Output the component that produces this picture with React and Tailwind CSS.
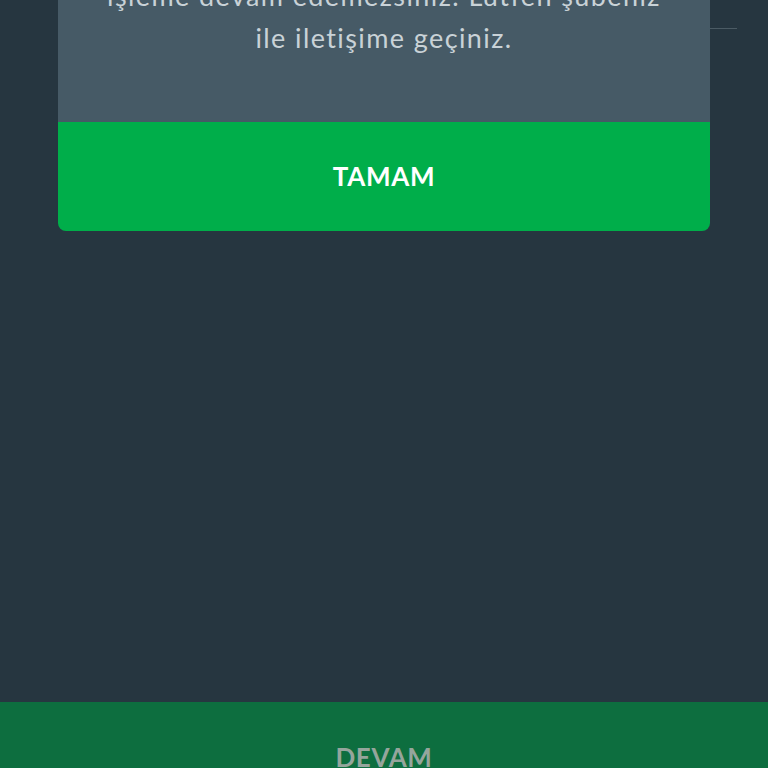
import React from 'react';

export default function App() {
  return (
    <div
      className="h-[768px] w-full overflow-hidden bg-[#263640] flex flex-col"
      style={{ fontFamily: 'Lato, "Noto Sans", sans-serif' }}
    >
      <div className="flex flex-row">
        <div className="w-[58px] shrink-0" />
        <div className="w-[652px] shrink-0 flex flex-col rounded-b-lg overflow-hidden">
          <div className="bg-[#465a66] pb-[63px] px-4">
            <p className="-mt-[25px] text-center text-[27px] tracking-[1.4px] leading-[42px] text-[#c9d2d7]">
              işleme devam edemezsiniz. Lütfen şubeniz
              <br />
              ile iletişime geçiniz.
            </p>
          </div>
          <button className="h-[109px] bg-[#00ae4a] text-white text-[26px] font-bold tracking-wide flex items-center justify-center">
            TAMAM
          </button>
        </div>
        <div className="flex-1 pt-[28px]">
          <div className="w-[27px] h-[1px] bg-[#4b5b64]" />
        </div>
      </div>
      <div className="flex-1" />
      <button className="mb-[-44px] h-[110px] shrink-0 bg-[#0d6e3f] text-[#95a59c] text-[26px] font-bold tracking-wide flex items-center justify-center">
        DEVAM
      </button>
    </div>
  );
}
